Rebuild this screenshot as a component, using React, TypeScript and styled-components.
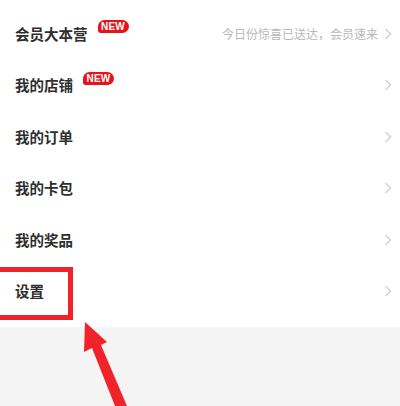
import React from "react";
import styled, { createGlobalStyle } from "styled-components";

const Global = createGlobalStyle`
  html, body { margin: 0; padding: 0; }
  body {
    width: 400px;
    height: 406px;
    overflow: hidden;
    background: #f4f4f4;
    font-family: "Noto Sans CJK SC", "Noto Sans", sans-serif;
  }
`;

const Page = styled.div`
  position: relative;
  width: 400px;
  height: 406px;
  background: #f4f4f4;
  overflow: hidden;
`;

const List = styled.div`
  background: #ffffff;
  padding: 8px 0 10px;
  display: flex;
  flex-direction: column;
`;

const Row = styled.div`
  height: 51.5px;
  display: flex;
  align-items: center;
  padding: 0 8px 0 15px;
`;

const Title = styled.span`
  font-size: 14.5px;
  font-weight: 700;
  color: #2e2e2e;
  line-height: 1;
`;

const Badge = styled.span`
  margin-left: 10px;
  align-self: flex-start;
  margin-top: 12px;
  height: 13px;
  width: 31px;
  box-sizing: border-box;
  background: #e8121c;
  color: #fff;
  border-radius: 7px 7px 7px 3px;
  font-family: "Liberation Sans", Arial, sans-serif;
  font-size: 10px;
  font-weight: 700;
  display: flex;
  align-items: center;
  justify-content: center;
  letter-spacing: 0.2px;
`;

const Spacer = styled.div`
  flex: 1;
`;

const Hint = styled.span`
  font-size: 12px;
  color: #b8b8b8;
  margin-right: 6px;
  line-height: 1;
`;

const Chevron = styled.svg`
  width: 8px;
  height: 12px;
  flex-shrink: 0;
`;

const Highlight = styled.div`
  position: absolute;
  left: -6px;
  top: 267px;
  width: 79px;
  height: 53px;
  box-sizing: border-box;
  border: 5px solid #f1232a;
`;

const Arrow = styled.svg`
  position: absolute;
  left: 0;
  top: 0;
  width: 400px;
  height: 406px;
  pointer-events: none;
`;

const Arrowhead = () => (
  <Chevron viewBox="0 0 8 12">
    <path d="M1.5 1 L6.5 6 L1.5 11" fill="none" stroke="#cfcfcf" strokeWidth="1.3" />
  </Chevron>
);

const items: { title: string; isNew?: boolean; hint?: string }[] = [
  { title: "会员大本营", isNew: true, hint: "今日份惊喜已送达，会员速来" },
  { title: "我的店铺", isNew: true },
  { title: "我的订单" },
  { title: "我的卡包" },
  { title: "我的奖品" },
  { title: "设置" },
];

export default function App() {
  return (
    <>
      <Global />
      <Page>
        <List>
          {items.map((it) => (
            <Row key={it.title}>
              <Title>{it.title}</Title>
              {it.isNew && <Badge>NEW</Badge>}
              <Spacer />
              {it.hint && <Hint>{it.hint}</Hint>}
              <Arrowhead />
            </Row>
          ))}
        </List>
        <Highlight />
        <Arrow viewBox="0 0 400 406">
          <polygon
            points="85,322 107,342 101,345 127,406 115,406 92,348 84,352"
            fill="#f1232a"
          />
        </Arrow>
      </Page>
    </>
  );
}
